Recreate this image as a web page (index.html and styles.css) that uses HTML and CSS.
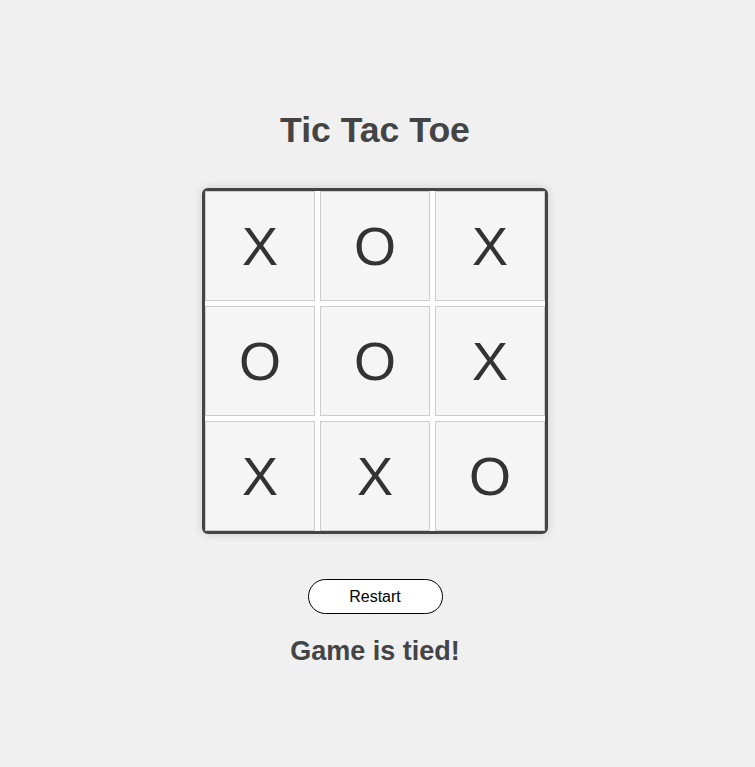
FILE: index.html
```html
<!DOCTYPE html>
<html lang="en">
<head>
<meta charset="utf-8">
<title>Tic Tac Toe</title>
<link rel="stylesheet" href="styles.css">
</head>
<body>
<main class="game">
  <h1 class="title">Tic Tac Toe</h1>
  <div class="board">
    <div class="cell">X</div>
    <div class="cell">O</div>
    <div class="cell">X</div>
    <div class="cell">O</div>
    <div class="cell">O</div>
    <div class="cell">X</div>
    <div class="cell">X</div>
    <div class="cell">X</div>
    <div class="cell">O</div>
  </div>
  <button class="restart">Restart</button>
  <p class="status">Game is tied!</p>
</main>
</body>
</html>
```
FILE: styles.css
```css
html, body {
  margin: 0;
  padding: 0;
  background: #f0f0f0;
}
body {
  font-family: "Liberation Sans", Arial, sans-serif;
}
.game {
  display: flex;
  flex-direction: column;
  align-items: center;
  padding-top: 108px;
  padding-right: 5px;
}
.title {
  margin: 0;
  font-size: 35.6px;
  line-height: 44px;
  font-weight: bold;
  color: #444;
}
.board {
  margin-top: 36px;
  display: grid;
  grid-template-columns: repeat(3, 110px);
  grid-template-rows: repeat(3, 110px);
  gap: 5px;
  background: #fff;
  border: 3px solid #444;
  border-radius: 6px;
  box-shadow: 0 0 10px rgba(0, 0, 0, 0.15);
}
.cell {
  box-sizing: border-box;
  display: flex;
  align-items: center;
  justify-content: center;
  background: #f5f5f5;
  border: 1px solid #ccc;
  font-size: 54px;
  color: #333;
}
.restart {
  margin-top: 45px;
  width: 135px;
  height: 35px;
  background: #fff;
  border: 1px solid #000;
  border-radius: 18px;
  font-family: "Liberation Sans", Arial, sans-serif;
  font-size: 16px;
  color: #000;
  padding: 0;
}
.status {
  margin: 20px 0 0;
  font-size: 27px;
  line-height: 34px;
  font-weight: bold;
  color: #444;
}
```
